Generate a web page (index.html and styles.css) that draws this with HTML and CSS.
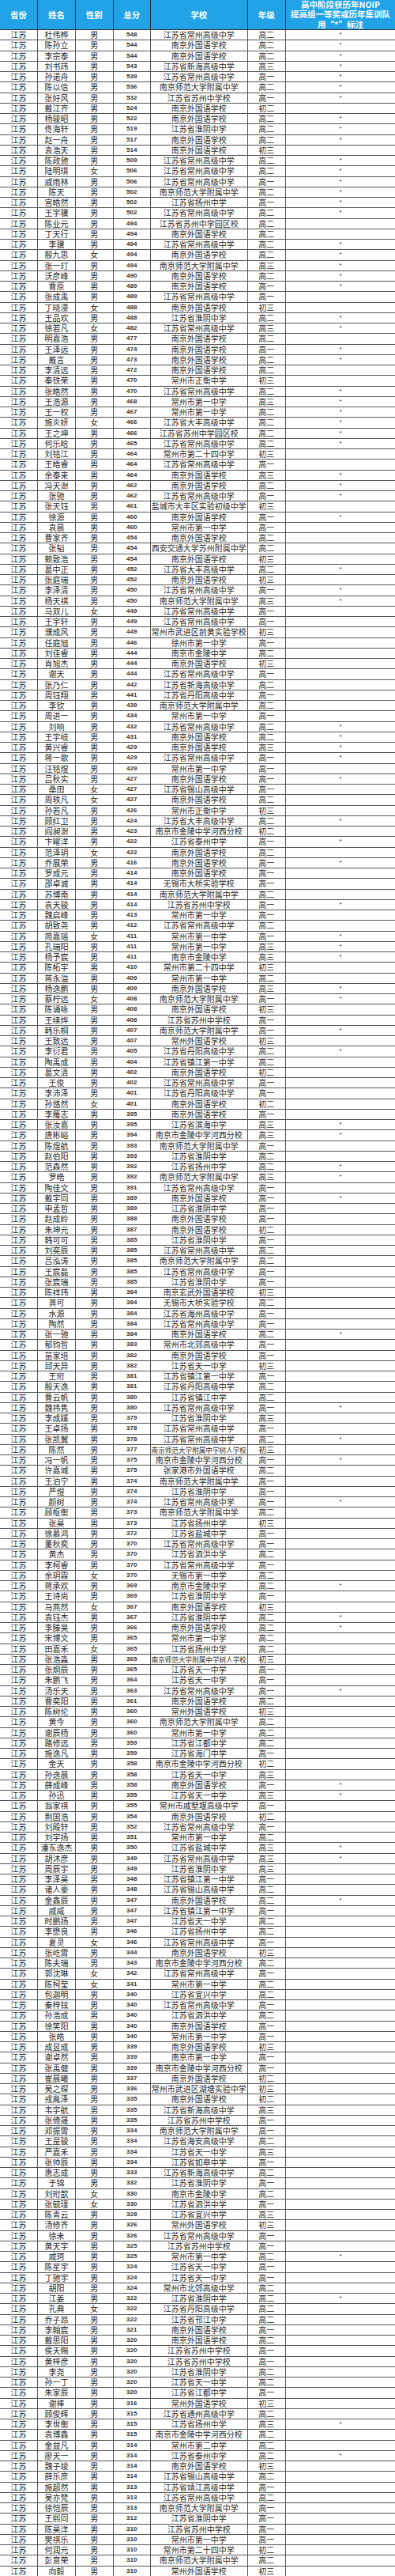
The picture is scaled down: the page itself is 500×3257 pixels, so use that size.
FILE: index.html
```html
<!DOCTYPE html>
<html lang="zh-CN">
<head>
<meta charset="utf-8">
<title>NOIP 江苏</title>
<link rel="stylesheet" href="styles.css">
</head>
<body>
<div class="tbl">
<div class="r hd"><span>省份</span><span>姓名</span><span>性别</span><span>总分</span><span>学校</span><span>年级</span><span class="note">高中阶段获历年NOIP<br>提高组一等奖或历年集训队<br>用“*”标注</span></div>
<div class="r"><span>江苏</span><span>杜伟桦</span><span>男</span><span class="n">548</span><span>江苏省常州高级中学</span><span>高二</span><span class="s">*</span></div>
<div class="r"><span>江苏</span><span>陈孙立</span><span>男</span><span class="n">544</span><span>南京外国语学校</span><span>高二</span><span class="s">*</span></div>
<div class="r"><span>江苏</span><span>李宗泰</span><span>男</span><span class="n">544</span><span>南京外国语学校</span><span>高二</span><span class="s">*</span></div>
<div class="r"><span>江苏</span><span>刘书玮</span><span>男</span><span class="n">543</span><span>江苏省新海高级中学</span><span>高三</span><span class="s">*</span></div>
<div class="r"><span>江苏</span><span>孙诺舟</span><span>男</span><span class="n">539</span><span>江苏省常州高级中学</span><span>高一</span><span class="s">*</span></div>
<div class="r"><span>江苏</span><span>陈以信</span><span>男</span><span class="n">536</span><span>南京师范大学附属中学</span><span>高二</span><span class="s">*</span></div>
<div class="r"><span>江苏</span><span>张好风</span><span>男</span><span class="n">532</span><span>江苏省苏州中学校</span><span>高一</span><span class="s">*</span></div>
<div class="r"><span>江苏</span><span>戴江齐</span><span>男</span><span class="n">524</span><span>南京外国语学校</span><span>初二</span><span class="s"></span></div>
<div class="r"><span>江苏</span><span>杨骏昭</span><span>男</span><span class="n">522</span><span>南京外国语学校</span><span>高二</span><span class="s">*</span></div>
<div class="r"><span>江苏</span><span>佟海轩</span><span>男</span><span class="n">519</span><span>江苏省淮阴中学</span><span>高二</span><span class="s">*</span></div>
<div class="r"><span>江苏</span><span>赵一舟</span><span>男</span><span class="n">517</span><span>南京外国语学校</span><span>高二</span><span class="s">*</span></div>
<div class="r"><span>江苏</span><span>袁浩天</span><span>男</span><span class="n">514</span><span>南京外国语学校</span><span>初三</span><span class="s"></span></div>
<div class="r"><span>江苏</span><span>陈政驰</span><span>男</span><span class="n">509</span><span>江苏省常州高级中学</span><span>高二</span><span class="s">*</span></div>
<div class="r"><span>江苏</span><span>陆明琪</span><span>女</span><span class="n">506</span><span>江苏省常州高级中学</span><span>高二</span><span class="s">*</span></div>
<div class="r"><span>江苏</span><span>戚雨林</span><span>男</span><span class="n">506</span><span>江苏省常州高级中学</span><span>高一</span><span class="s">*</span></div>
<div class="r"><span>江苏</span><span>陈天</span><span>男</span><span class="n">502</span><span>南京师范大学附属中学</span><span>高二</span><span class="s">*</span></div>
<div class="r"><span>江苏</span><span>宫皓然</span><span>男</span><span class="n">502</span><span>江苏省扬州中学</span><span>高一</span><span class="s">*</span></div>
<div class="r"><span>江苏</span><span>王宇骥</span><span>男</span><span class="n">502</span><span>江苏省常州高级中学</span><span>高二</span><span class="s">*</span></div>
<div class="r"><span>江苏</span><span>陈业元</span><span>男</span><span class="n">494</span><span>江苏省苏州中学园区校</span><span>高二</span><span class="s"></span></div>
<div class="r"><span>江苏</span><span>丁天行</span><span>男</span><span class="n">494</span><span>南京外国语学校</span><span>高二</span><span class="s"></span></div>
<div class="r"><span>江苏</span><span>李骥</span><span>男</span><span class="n">494</span><span>江苏省常州高级中学</span><span>高二</span><span class="s">*</span></div>
<div class="r"><span>江苏</span><span>殷九思</span><span>女</span><span class="n">494</span><span>南京外国语学校</span><span>高二</span><span class="s">*</span></div>
<div class="r"><span>江苏</span><span>张一玎</span><span>男</span><span class="n">494</span><span>南京师范大学附属中学</span><span>高三</span><span class="s">*</span></div>
<div class="r"><span>江苏</span><span>沃彦峰</span><span>男</span><span class="n">490</span><span>南京外国语学校</span><span>高二</span><span class="s">*</span></div>
<div class="r"><span>江苏</span><span>曹原</span><span>男</span><span class="n">489</span><span>南京外国语学校</span><span>高一</span><span class="s">*</span></div>
<div class="r"><span>江苏</span><span>张成禹</span><span>男</span><span class="n">489</span><span>江苏省常州高级中学</span><span>高一</span><span class="s"></span></div>
<div class="r"><span>江苏</span><span>丁晓漫</span><span>女</span><span class="n">488</span><span>南京外国语学校</span><span>初三</span><span class="s"></span></div>
<div class="r"><span>江苏</span><span>王品欢</span><span>男</span><span class="n">488</span><span>江苏省淮阴中学</span><span>高二</span><span class="s">*</span></div>
<div class="r"><span>江苏</span><span>徐若凡</span><span>女</span><span class="n">482</span><span>江苏省常州高级中学</span><span>高三</span><span class="s">*</span></div>
<div class="r"><span>江苏</span><span>明嘉浩</span><span>男</span><span class="n">477</span><span>南京外国语学校</span><span>高二</span><span class="s"></span></div>
<div class="r"><span>江苏</span><span>王泽远</span><span>男</span><span class="n">474</span><span>南京外国语学校</span><span>高一</span><span class="s">*</span></div>
<div class="r"><span>江苏</span><span>戴言</span><span>男</span><span class="n">473</span><span>南京外国语学校</span><span>高二</span><span class="s">*</span></div>
<div class="r"><span>江苏</span><span>李清远</span><span>男</span><span class="n">472</span><span>南京外国语学校</span><span>高二</span><span class="s"></span></div>
<div class="r"><span>江苏</span><span>秦铁荣</span><span>男</span><span class="n">470</span><span>常州市正衡中学</span><span>初三</span><span class="s"></span></div>
<div class="r"><span>江苏</span><span>张皓然</span><span>男</span><span class="n">470</span><span>江苏省常州高级中学</span><span>高二</span><span class="s">*</span></div>
<div class="r"><span>江苏</span><span>王浩源</span><span>男</span><span class="n">468</span><span>常州市第一中学</span><span>高三</span><span class="s">*</span></div>
<div class="r"><span>江苏</span><span>王一权</span><span>男</span><span class="n">467</span><span>常州市第一中学</span><span>高二</span><span class="s">*</span></div>
<div class="r"><span>江苏</span><span>施炎妍</span><span>女</span><span class="n">466</span><span>江苏省大丰高级中学</span><span>高二</span><span class="s">*</span></div>
<div class="r"><span>江苏</span><span>王之坤</span><span>男</span><span class="n">466</span><span>江苏省苏州中学园区校</span><span>高二</span><span class="s">*</span></div>
<div class="r"><span>江苏</span><span>何乐晗</span><span>男</span><span class="n">465</span><span>江苏省常州高级中学</span><span>高二</span><span class="s">*</span></div>
<div class="r"><span>江苏</span><span>刘铭江</span><span>男</span><span class="n">464</span><span>常州市第二十四中学</span><span>初三</span><span class="s"></span></div>
<div class="r"><span>江苏</span><span>王皓睿</span><span>男</span><span class="n">464</span><span>江苏省常州高级中学</span><span>高一</span><span class="s"></span></div>
<div class="r"><span>江苏</span><span>余泰来</span><span>男</span><span class="n">464</span><span>南京外国语学校</span><span>高三</span><span class="s">*</span></div>
<div class="r"><span>江苏</span><span>冯天澍</span><span>男</span><span class="n">462</span><span>南京外国语学校</span><span>高二</span><span class="s">*</span></div>
<div class="r"><span>江苏</span><span>张驰</span><span>男</span><span class="n">462</span><span>江苏省常州高级中学</span><span>高一</span><span class="s">*</span></div>
<div class="r"><span>江苏</span><span>张天钰</span><span>男</span><span class="n">461</span><span>盐城市大丰区实验初级中学</span><span>初三</span><span class="s"></span></div>
<div class="r"><span>江苏</span><span>徐源</span><span>男</span><span class="n">460</span><span>南京外国语学校</span><span>高一</span><span class="s">*</span></div>
<div class="r"><span>江苏</span><span>袁晨</span><span>男</span><span class="n">460</span><span>常州市第一中学</span><span>高一</span><span class="s"></span></div>
<div class="r"><span>江苏</span><span>曹家齐</span><span>男</span><span class="n">454</span><span>南京外国语学校</span><span>高二</span><span class="s"></span></div>
<div class="r"><span>江苏</span><span>张韬</span><span>男</span><span class="n">454</span><span>西安交通大学苏州附属中学</span><span>高二</span><span class="s"></span></div>
<div class="r"><span>江苏</span><span>赖致浩</span><span>男</span><span class="n">454</span><span>南京外国语学校</span><span>初三</span><span class="s"></span></div>
<div class="r"><span>江苏</span><span>葛中正</span><span>男</span><span class="n">452</span><span>江苏省大丰高级中学</span><span>高二</span><span class="s">*</span></div>
<div class="r"><span>江苏</span><span>张庭瑞</span><span>男</span><span class="n">452</span><span>南京外国语学校</span><span>初三</span><span class="s"></span></div>
<div class="r"><span>江苏</span><span>李泽清</span><span>男</span><span class="n">450</span><span>江苏省常州高级中学</span><span>高一</span><span class="s">*</span></div>
<div class="r"><span>江苏</span><span>杨天祺</span><span>男</span><span class="n">450</span><span>南京师范大学附属中学</span><span>高三</span><span class="s">*</span></div>
<div class="r"><span>江苏</span><span>马双儿</span><span>女</span><span class="n">449</span><span>江苏省常州高级中学</span><span>高一</span><span class="s"></span></div>
<div class="r"><span>江苏</span><span>王宇轩</span><span>男</span><span class="n">449</span><span>江苏省常州高级中学</span><span>高一</span><span class="s"></span></div>
<div class="r"><span>江苏</span><span>濮成风</span><span>男</span><span class="n">449</span><span>常州市武进区前黄实验学校</span><span>初三</span><span class="s"></span></div>
<div class="r"><span>江苏</span><span>任庭旭</span><span>男</span><span class="n">446</span><span>徐州市第一中学</span><span>高一</span><span class="s"></span></div>
<div class="r"><span>江苏</span><span>刘佳睿</span><span>男</span><span class="n">444</span><span>南京市金陵中学</span><span>高二</span><span class="s"></span></div>
<div class="r"><span>江苏</span><span>肖旭杰</span><span>男</span><span class="n">444</span><span>南京外国语学校</span><span>初三</span><span class="s"></span></div>
<div class="r"><span>江苏</span><span>谢天</span><span>男</span><span class="n">444</span><span>江苏省常州高级中学</span><span>高一</span><span class="s"></span></div>
<div class="r"><span>江苏</span><span>张乃仁</span><span>男</span><span class="n">442</span><span>江苏省新海高级中学</span><span>高二</span><span class="s"></span></div>
<div class="r"><span>江苏</span><span>周钰翔</span><span>男</span><span class="n">441</span><span>江苏省丹阳高级中学</span><span>高一</span><span class="s"></span></div>
<div class="r"><span>江苏</span><span>李钦</span><span>男</span><span class="n">439</span><span>南京师范大学附属中学</span><span>高二</span><span class="s"></span></div>
<div class="r"><span>江苏</span><span>周进一</span><span>男</span><span class="n">434</span><span>常州市第一中学</span><span>高一</span><span class="s"></span></div>
<div class="r"><span>江苏</span><span>刘响</span><span>男</span><span class="n">432</span><span>江苏省常州高级中学</span><span>高二</span><span class="s">*</span></div>
<div class="r"><span>江苏</span><span>王宇岐</span><span>男</span><span class="n">431</span><span>南京外国语学校</span><span>高二</span><span class="s">*</span></div>
<div class="r"><span>江苏</span><span>黄兴睿</span><span>男</span><span class="n">429</span><span>南京外国语学校</span><span>高三</span><span class="s">*</span></div>
<div class="r"><span>江苏</span><span>蒋一歌</span><span>男</span><span class="n">429</span><span>江苏省常州高级中学</span><span>高一</span><span class="s">*</span></div>
<div class="r"><span>江苏</span><span>汪铭煜</span><span>男</span><span class="n">429</span><span>常州市第一中学</span><span>高一</span><span class="s"></span></div>
<div class="r"><span>江苏</span><span>吕秋实</span><span>男</span><span class="n">427</span><span>南京外国语学校</span><span>高一</span><span class="s">*</span></div>
<div class="r"><span>江苏</span><span>桑田</span><span>女</span><span class="n">427</span><span>江苏省锡山高级中学</span><span>高一</span><span class="s"></span></div>
<div class="r"><span>江苏</span><span>周轶凡</span><span>女</span><span class="n">427</span><span>南京外国语学校</span><span>高二</span><span class="s"></span></div>
<div class="r"><span>江苏</span><span>孙若凡</span><span>男</span><span class="n">426</span><span>常州市正衡中学</span><span>初三</span><span class="s"></span></div>
<div class="r"><span>江苏</span><span>顾红卫</span><span>男</span><span class="n">424</span><span>江苏省大丰高级中学</span><span>高二</span><span class="s">*</span></div>
<div class="r"><span>江苏</span><span>阎昶澍</span><span>男</span><span class="n">423</span><span>南京市金陵中学河西分校</span><span>初二</span><span class="s"></span></div>
<div class="r"><span>江苏</span><span>卞曜洋</span><span>男</span><span class="n">422</span><span>江苏省泰州中学</span><span>高一</span><span class="s">*</span></div>
<div class="r"><span>江苏</span><span>范泽玥</span><span>女</span><span class="n">422</span><span>南京外国语学校</span><span>高二</span><span class="s"></span></div>
<div class="r"><span>江苏</span><span>乔展荣</span><span>男</span><span class="n">416</span><span>南京外国语学校</span><span>高一</span><span class="s">*</span></div>
<div class="r"><span>江苏</span><span>罗成元</span><span>男</span><span class="n">414</span><span>南京外国语学校</span><span>高一</span><span class="s"></span></div>
<div class="r"><span>江苏</span><span>邵卓诚</span><span>男</span><span class="n">414</span><span>无锡市大桥实验学校</span><span>高一</span><span class="s"></span></div>
<div class="r"><span>江苏</span><span>苏博南</span><span>男</span><span class="n">414</span><span>南京师范大学附属中学</span><span>高二</span><span class="s"></span></div>
<div class="r"><span>江苏</span><span>袁天骏</span><span>男</span><span class="n">414</span><span>江苏省苏州中学校</span><span>高一</span><span class="s">*</span></div>
<div class="r"><span>江苏</span><span>魏启峰</span><span>男</span><span class="n">413</span><span>常州市第一中学</span><span>高一</span><span class="s"></span></div>
<div class="r"><span>江苏</span><span>胡致尧</span><span>男</span><span class="n">412</span><span>江苏省常州高级中学</span><span>高二</span><span class="s"></span></div>
<div class="r"><span>江苏</span><span>简嘉瑶</span><span>女</span><span class="n">411</span><span>常州市第一中学</span><span>高一</span><span class="s">*</span></div>
<div class="r"><span>江苏</span><span>孔瑞阳</span><span>男</span><span class="n">411</span><span>常州市第一中学</span><span>高三</span><span class="s">*</span></div>
<div class="r"><span>江苏</span><span>杨予宸</span><span>男</span><span class="n">411</span><span>南京市金陵中学</span><span>高三</span><span class="s">*</span></div>
<div class="r"><span>江苏</span><span>陈柘宇</span><span>男</span><span class="n">410</span><span>常州市第二十四中学</span><span>初三</span><span class="s"></span></div>
<div class="r"><span>江苏</span><span>蒋永溢</span><span>男</span><span class="n">409</span><span>常州市第一中学</span><span>高二</span><span class="s"></span></div>
<div class="r"><span>江苏</span><span>杨逸鹏</span><span>男</span><span class="n">409</span><span>南京外国语学校</span><span>高三</span><span class="s">*</span></div>
<div class="r"><span>江苏</span><span>蔡柠远</span><span>女</span><span class="n">408</span><span>南京师范大学附属中学</span><span>高一</span><span class="s">*</span></div>
<div class="r"><span>江苏</span><span>陈诵咏</span><span>男</span><span class="n">408</span><span>南京外国语学校</span><span>初三</span><span class="s"></span></div>
<div class="r"><span>江苏</span><span>王续烨</span><span>男</span><span class="n">408</span><span>江苏省苏州中学校</span><span>高一</span><span class="s"></span></div>
<div class="r"><span>江苏</span><span>韩乐桐</span><span>男</span><span class="n">407</span><span>南京师范大学附属中学</span><span>高一</span><span class="s">*</span></div>
<div class="r"><span>江苏</span><span>王致远</span><span>男</span><span class="n">407</span><span>常州外国语学校</span><span>初三</span><span class="s"></span></div>
<div class="r"><span>江苏</span><span>李衍君</span><span>男</span><span class="n">405</span><span>江苏省丹阳高级中学</span><span>高二</span><span class="s">*</span></div>
<div class="r"><span>江苏</span><span>陶禹成</span><span>男</span><span class="n">404</span><span>江苏省镇江第一中学</span><span>高二</span><span class="s"></span></div>
<div class="r"><span>江苏</span><span>葛文清</span><span>男</span><span class="n">402</span><span>南京外国语学校</span><span>初二</span><span class="s"></span></div>
<div class="r"><span>江苏</span><span>王俊</span><span>男</span><span class="n">402</span><span>江苏省常州高级中学</span><span>高一</span><span class="s"></span></div>
<div class="r"><span>江苏</span><span>李沛泽</span><span>男</span><span class="n">401</span><span>江苏省丹阳高级中学</span><span>高一</span><span class="s"></span></div>
<div class="r"><span>江苏</span><span>孙悠然</span><span>女</span><span class="n">401</span><span>南京外国语学校</span><span>初二</span><span class="s"></span></div>
<div class="r"><span>江苏</span><span>李雁志</span><span>男</span><span class="n">395</span><span>南京外国语学校</span><span>高一</span><span class="s"></span></div>
<div class="r"><span>江苏</span><span>张汝嘉</span><span>男</span><span class="n">395</span><span>江苏省滨海中学</span><span>高三</span><span class="s">*</span></div>
<div class="r"><span>江苏</span><span>唐彬峪</span><span>男</span><span class="n">394</span><span>南京市金陵中学河西分校</span><span>高三</span><span class="s">*</span></div>
<div class="r"><span>江苏</span><span>陈煜航</span><span>男</span><span class="n">393</span><span>南京师范大学附属中学</span><span>高一</span><span class="s"></span></div>
<div class="r"><span>江苏</span><span>赵伯阳</span><span>男</span><span class="n">393</span><span>江苏省淮阴中学</span><span>高二</span><span class="s"></span></div>
<div class="r"><span>江苏</span><span>范森然</span><span>男</span><span class="n">392</span><span>江苏省扬州中学</span><span>高二</span><span class="s">*</span></div>
<div class="r"><span>江苏</span><span>罗皓</span><span>男</span><span class="n">392</span><span>南京师范大学附属中学</span><span>高三</span><span class="s">*</span></div>
<div class="r"><span>江苏</span><span>陶佳文</span><span>男</span><span class="n">391</span><span>江苏省常州高级中学</span><span>高一</span><span class="s"></span></div>
<div class="r"><span>江苏</span><span>戴宇同</span><span>男</span><span class="n">389</span><span>南京外国语学校</span><span>高一</span><span class="s">*</span></div>
<div class="r"><span>江苏</span><span>申孟哲</span><span>男</span><span class="n">389</span><span>江苏省淮阴中学</span><span>高一</span><span class="s"></span></div>
<div class="r"><span>江苏</span><span>赵成岭</span><span>男</span><span class="n">388</span><span>南京外国语学校</span><span>高一</span><span class="s"></span></div>
<div class="r"><span>江苏</span><span>朱坤元</span><span>男</span><span class="n">387</span><span>南京外国语学校</span><span>初二</span><span class="s"></span></div>
<div class="r"><span>江苏</span><span>韩可可</span><span>男</span><span class="n">385</span><span>江苏省淮阴中学</span><span>高一</span><span class="s"></span></div>
<div class="r"><span>江苏</span><span>刘奕辰</span><span>男</span><span class="n">385</span><span>江苏省常州高级中学</span><span>高二</span><span class="s"></span></div>
<div class="r"><span>江苏</span><span>吕泓涛</span><span>男</span><span class="n">385</span><span>南京师范大学附属中学</span><span>高二</span><span class="s"></span></div>
<div class="r"><span>江苏</span><span>王宸磊</span><span>男</span><span class="n">385</span><span>江苏省常州高级中学</span><span>高一</span><span class="s"></span></div>
<div class="r"><span>江苏</span><span>张宸瑞</span><span>男</span><span class="n">385</span><span>江苏省淮阴中学</span><span>高一</span><span class="s"></span></div>
<div class="r"><span>江苏</span><span>陈祥玮</span><span>男</span><span class="n">384</span><span>南京玄武外国语学校</span><span>初三</span><span class="s"></span></div>
<div class="r"><span>江苏</span><span>龚可</span><span>男</span><span class="n">384</span><span>无锡市大桥实验学校</span><span>高二</span><span class="s"></span></div>
<div class="r"><span>江苏</span><span>水源</span><span>男</span><span class="n">384</span><span>江苏省海州高级中学</span><span>高一</span><span class="s"></span></div>
<div class="r"><span>江苏</span><span>陶然</span><span>男</span><span class="n">384</span><span>江苏省常州高级中学</span><span>高一</span><span class="s"></span></div>
<div class="r"><span>江苏</span><span>张一驰</span><span>男</span><span class="n">384</span><span>南京外国语学校</span><span>高二</span><span class="s">*</span></div>
<div class="r"><span>江苏</span><span>郁钧哲</span><span>男</span><span class="n">383</span><span>常州市北郊高级中学</span><span>高一</span><span class="s"></span></div>
<div class="r"><span>江苏</span><span>苗家培</span><span>男</span><span class="n">382</span><span>南京外国语学校</span><span>高一</span><span class="s"></span></div>
<div class="r"><span>江苏</span><span>邱天异</span><span>男</span><span class="n">382</span><span>江苏省天一中学</span><span>初三</span><span class="s"></span></div>
<div class="r"><span>江苏</span><span>王珩</span><span>男</span><span class="n">381</span><span>江苏省镇江第一中学</span><span>高一</span><span class="s"></span></div>
<div class="r"><span>江苏</span><span>殷天逸</span><span>男</span><span class="n">381</span><span>江苏省丹阳高级中学</span><span>高二</span><span class="s"></span></div>
<div class="r"><span>江苏</span><span>曹云帆</span><span>男</span><span class="n">380</span><span>江苏省镇江中学</span><span>高二</span><span class="s"></span></div>
<div class="r"><span>江苏</span><span>魏祎隽</span><span>男</span><span class="n">380</span><span>江苏省常州高级中学</span><span>高一</span><span class="s">*</span></div>
<div class="r"><span>江苏</span><span>李成蹊</span><span>男</span><span class="n">379</span><span>江苏省淮阴中学</span><span>高三</span><span class="s"></span></div>
<div class="r"><span>江苏</span><span>王卓扬</span><span>男</span><span class="n">378</span><span>江苏省常州高级中学</span><span>高一</span><span class="s"></span></div>
<div class="r"><span>江苏</span><span>张凯翼</span><span>男</span><span class="n">378</span><span>江苏省常州高级中学</span><span>高二</span><span class="s">*</span></div>
<div class="r"><span>江苏</span><span>陈然</span><span>男</span><span class="n">377</span><span class="long">南京师范大学附属中学树人学校</span><span>初三</span><span class="s"></span></div>
<div class="r"><span>江苏</span><span>冯一帆</span><span>男</span><span class="n">375</span><span>南京市金陵中学河西分校</span><span>高一</span><span class="s">*</span></div>
<div class="r"><span>江苏</span><span>许嘉城</span><span>男</span><span class="n">375</span><span>张家港市外国语学校</span><span>高二</span><span class="s"></span></div>
<div class="r"><span>江苏</span><span>王泊宁</span><span>男</span><span class="n">374</span><span>南京师范大学附属中学</span><span>高一</span><span class="s"></span></div>
<div class="r"><span>江苏</span><span>严煜</span><span>男</span><span class="n">374</span><span>江苏省淮阴中学</span><span>高一</span><span class="s"></span></div>
<div class="r"><span>江苏</span><span>颜树</span><span>男</span><span class="n">374</span><span>江苏省常州高级中学</span><span>高一</span><span class="s">*</span></div>
<div class="r"><span>江苏</span><span>顾枢衡</span><span>男</span><span class="n">373</span><span>南京师范大学附属中学</span><span>高二</span><span class="s"></span></div>
<div class="r"><span>江苏</span><span>张昊</span><span>男</span><span class="n">373</span><span>江苏省扬州中学</span><span>初三</span><span class="s"></span></div>
<div class="r"><span>江苏</span><span>徐慕鸿</span><span>男</span><span class="n">372</span><span>江苏省盐城中学</span><span>高一</span><span class="s"></span></div>
<div class="r"><span>江苏</span><span>董秋奕</span><span>男</span><span class="n">370</span><span>江苏省常州高级中学</span><span>高一</span><span class="s"></span></div>
<div class="r"><span>江苏</span><span>黄杰</span><span>男</span><span class="n">370</span><span>江苏省泗洪中学</span><span>高二</span><span class="s"></span></div>
<div class="r"><span>江苏</span><span>李柯睿</span><span>男</span><span class="n">370</span><span>江苏省常州高级中学</span><span>高一</span><span class="s"></span></div>
<div class="r"><span>江苏</span><span>余玥霖</span><span>女</span><span class="n">370</span><span>无锡市第一中学</span><span>高二</span><span class="s"></span></div>
<div class="r"><span>江苏</span><span>蒋承欢</span><span>男</span><span class="n">369</span><span>南京市金陵中学</span><span>高二</span><span class="s">*</span></div>
<div class="r"><span>江苏</span><span>王诗尚</span><span>男</span><span class="n">369</span><span>江苏省淮阴中学</span><span>高一</span><span class="s"></span></div>
<div class="r"><span>江苏</span><span>马燕然</span><span>女</span><span class="n">367</span><span>南京外国语学校</span><span>初三</span><span class="s"></span></div>
<div class="r"><span>江苏</span><span>袁钰杰</span><span>男</span><span class="n">367</span><span>江苏省淮阴中学</span><span>高二</span><span class="s">*</span></div>
<div class="r"><span>江苏</span><span>李滕昊</span><span>男</span><span class="n">366</span><span>南京外国语学校</span><span>高二</span><span class="s">*</span></div>
<div class="r"><span>江苏</span><span>宋博文</span><span>男</span><span class="n">365</span><span>常州市第一中学</span><span>高二</span><span class="s"></span></div>
<div class="r"><span>江苏</span><span>田嘉禾</span><span>女</span><span class="n">365</span><span>江苏省扬州中学</span><span>高二</span><span class="s"></span></div>
<div class="r"><span>江苏</span><span>张浩淼</span><span>男</span><span class="n">365</span><span class="long">南京师范大学附属中学树人学校</span><span>初三</span><span class="s"></span></div>
<div class="r"><span>江苏</span><span>张炯辰</span><span>男</span><span class="n">365</span><span>江苏省天一中学</span><span>高一</span><span class="s"></span></div>
<div class="r"><span>江苏</span><span>朱鹏飞</span><span>男</span><span class="n">364</span><span>江苏省天一中学</span><span>高一</span><span class="s"></span></div>
<div class="r"><span>江苏</span><span>汤乐天</span><span>男</span><span class="n">363</span><span>江苏省常州高级中学</span><span>高一</span><span class="s">*</span></div>
<div class="r"><span>江苏</span><span>曹奕阳</span><span>男</span><span class="n">361</span><span>南京外国语学校</span><span>高二</span><span class="s"></span></div>
<div class="r"><span>江苏</span><span>陈树伦</span><span>男</span><span class="n">360</span><span>常州外国语学校</span><span>初三</span><span class="s"></span></div>
<div class="r"><span>江苏</span><span>黄今</span><span>男</span><span class="n">360</span><span>南京师范大学附属中学</span><span>高二</span><span class="s"></span></div>
<div class="r"><span>江苏</span><span>谢辰杨</span><span>男</span><span class="n">360</span><span>常州市第一中学</span><span>高二</span><span class="s"></span></div>
<div class="r"><span>江苏</span><span>路修远</span><span>男</span><span class="n">359</span><span>江苏省江都中学</span><span>高二</span><span class="s"></span></div>
<div class="r"><span>江苏</span><span>施逸凡</span><span>男</span><span class="n">359</span><span>江苏省海门中学</span><span>高一</span><span class="s"></span></div>
<div class="r"><span>江苏</span><span>金天</span><span>男</span><span class="n">358</span><span>南京市金陵中学河西分校</span><span>初二</span><span class="s"></span></div>
<div class="r"><span>江苏</span><span>孙逸晨</span><span>男</span><span class="n">358</span><span>江苏省天一中学</span><span>高三</span><span class="s"></span></div>
<div class="r"><span>江苏</span><span>薛成峰</span><span>男</span><span class="n">358</span><span>南京外国语学校</span><span>高一</span><span class="s">*</span></div>
<div class="r"><span>江苏</span><span>孙迅</span><span>男</span><span class="n">355</span><span>江苏省天一中学</span><span>高三</span><span class="s">*</span></div>
<div class="r"><span>江苏</span><span>翁家祺</span><span>男</span><span class="n">355</span><span>常州市戚墅堰高级中学</span><span>高一</span><span class="s"></span></div>
<div class="r"><span>江苏</span><span>荆国浩</span><span>男</span><span class="n">354</span><span>南京外国语学校</span><span>初二</span><span class="s"></span></div>
<div class="r"><span>江苏</span><span>刘殿轩</span><span>男</span><span class="n">352</span><span>江苏省常州高级中学</span><span>高一</span><span class="s"></span></div>
<div class="r"><span>江苏</span><span>刘宇扬</span><span>男</span><span class="n">351</span><span>常州市第一中学</span><span>高二</span><span class="s"></span></div>
<div class="r"><span>江苏</span><span>潘东逸杰</span><span>男</span><span class="n">350</span><span>江苏省盐城中学</span><span>高三</span><span class="s">*</span></div>
<div class="r"><span>江苏</span><span>胡沐彦</span><span>男</span><span class="n">349</span><span>江苏省常州高级中学</span><span>高三</span><span class="s">*</span></div>
<div class="r"><span>江苏</span><span>周辰宇</span><span>男</span><span class="n">349</span><span>江苏省淮阴中学</span><span>高三</span><span class="s"></span></div>
<div class="r"><span>江苏</span><span>李泽昊</span><span>男</span><span class="n">348</span><span>江苏省镇江第一中学</span><span>高一</span><span class="s"></span></div>
<div class="r"><span>江苏</span><span>诸人豪</span><span>男</span><span class="n">348</span><span>江苏省锡山高级中学</span><span>高二</span><span class="s"></span></div>
<div class="r"><span>江苏</span><span>金鑫辰</span><span>男</span><span class="n">347</span><span>南京外国语学校</span><span>高二</span><span class="s">*</span></div>
<div class="r"><span>江苏</span><span>戚威</span><span>男</span><span class="n">347</span><span>江苏省镇江第一中学</span><span>高一</span><span class="s"></span></div>
<div class="r"><span>江苏</span><span>时鹏扬</span><span>男</span><span class="n">347</span><span>江苏省天一中学</span><span>高二</span><span class="s"></span></div>
<div class="r"><span>江苏</span><span>李懋良</span><span>男</span><span class="n">346</span><span>江苏省扬州中学</span><span>高二</span><span class="s"></span></div>
<div class="r"><span>江苏</span><span>夏灵</span><span>女</span><span class="n">346</span><span>江苏省常州高级中学</span><span>高一</span><span class="s"></span></div>
<div class="r"><span>江苏</span><span>张屹霄</span><span>男</span><span class="n">344</span><span>南京外国语学校</span><span>初三</span><span class="s"></span></div>
<div class="r"><span>江苏</span><span>陈夫瑞</span><span>男</span><span class="n">343</span><span>南京市金陵中学河西分校</span><span>高二</span><span class="s"></span></div>
<div class="r"><span>江苏</span><span>郭沈琳</span><span>女</span><span class="n">342</span><span>江苏省常州高级中学</span><span>高一</span><span class="s"></span></div>
<div class="r"><span>江苏</span><span>陈柯莹</span><span>女</span><span class="n">341</span><span>常州市第一中学</span><span>高二</span><span class="s"></span></div>
<div class="r"><span>江苏</span><span>包迦明</span><span>男</span><span class="n">340</span><span>江苏省宜兴中学</span><span>高二</span><span class="s"></span></div>
<div class="r"><span>江苏</span><span>秦梓铉</span><span>男</span><span class="n">340</span><span>江苏省常州高级中学</span><span>高一</span><span class="s"></span></div>
<div class="r"><span>江苏</span><span>孙浩成</span><span>男</span><span class="n">340</span><span>江苏省泗洪中学</span><span>高二</span><span class="s"></span></div>
<div class="r"><span>江苏</span><span>徐笑阳</span><span>男</span><span class="n">340</span><span>南京外国语学校</span><span>高一</span><span class="s"></span></div>
<div class="r"><span>江苏</span><span>张皓</span><span>男</span><span class="n">340</span><span>常州市第一中学</span><span>高一</span><span class="s"></span></div>
<div class="r"><span>江苏</span><span>成昱成</span><span>男</span><span class="n">339</span><span>南京外国语学校</span><span>初三</span><span class="s"></span></div>
<div class="r"><span>江苏</span><span>谢卓然</span><span>男</span><span class="n">339</span><span>南京市第一中学</span><span>高一</span><span class="s"></span></div>
<div class="r"><span>江苏</span><span>张禹健</span><span>男</span><span class="n">339</span><span>南京市金陵中学河西分校</span><span>高一</span><span class="s"></span></div>
<div class="r"><span>江苏</span><span>崔晨曦</span><span>男</span><span class="n">337</span><span>南京外国语学校</span><span>初二</span><span class="s"></span></div>
<div class="r"><span>江苏</span><span>吴之琛</span><span>男</span><span class="n">336</span><span>常州市武进区湖塘实验中学</span><span>初三</span><span class="s"></span></div>
<div class="r"><span>江苏</span><span>戎胤泽</span><span>男</span><span class="n">335</span><span>南京外国语学校</span><span>初二</span><span class="s"></span></div>
<div class="r"><span>江苏</span><span>韦宇航</span><span>男</span><span class="n">335</span><span>江苏省新海高级中学</span><span>高三</span><span class="s"></span></div>
<div class="r"><span>江苏</span><span>张倚晟</span><span>男</span><span class="n">335</span><span>江苏省苏州中学校</span><span>高一</span><span class="s"></span></div>
<div class="r"><span>江苏</span><span>邓振霄</span><span>男</span><span class="n">334</span><span>南京师范大学附属中学</span><span>高一</span><span class="s"></span></div>
<div class="r"><span>江苏</span><span>王昰骏</span><span>男</span><span class="n">334</span><span>江苏省海安高级中学</span><span>高二</span><span class="s"></span></div>
<div class="r"><span>江苏</span><span>严嘉禾</span><span>男</span><span class="n">334</span><span>江苏省天一中学</span><span>高三</span><span class="s"></span></div>
<div class="r"><span>江苏</span><span>张帅辰</span><span>男</span><span class="n">334</span><span>江苏省如皋中学</span><span>高一</span><span class="s"></span></div>
<div class="r"><span>江苏</span><span>惠志成</span><span>男</span><span class="n">333</span><span>江苏省新海高级中学</span><span>高二</span><span class="s"></span></div>
<div class="r"><span>江苏</span><span>于锦</span><span>男</span><span class="n">332</span><span>江苏省淮阴中学</span><span>高一</span><span class="s"></span></div>
<div class="r"><span>江苏</span><span>刘珩歆</span><span>女</span><span class="n">330</span><span>南京市金陵中学</span><span>高二</span><span class="s"></span></div>
<div class="r"><span>江苏</span><span>张毓瑾</span><span>女</span><span class="n">330</span><span>江苏省泗洪中学</span><span>高一</span><span class="s"></span></div>
<div class="r"><span>江苏</span><span>陈青云</span><span>男</span><span class="n">328</span><span>江苏省宜兴中学</span><span>高三</span><span class="s"></span></div>
<div class="r"><span>江苏</span><span>汤修齐</span><span>男</span><span class="n">326</span><span>常州外国语学校</span><span>初三</span><span class="s"></span></div>
<div class="r"><span>江苏</span><span>徐未</span><span>男</span><span class="n">326</span><span>江苏省常州高级中学</span><span>高一</span><span class="s"></span></div>
<div class="r"><span>江苏</span><span>黄天宇</span><span>男</span><span class="n">325</span><span>江苏省苏州中学校</span><span>高一</span><span class="s"></span></div>
<div class="r"><span>江苏</span><span>戚珂</span><span>男</span><span class="n">325</span><span>常州市第一中学</span><span>高二</span><span class="s">*</span></div>
<div class="r"><span>江苏</span><span>陈星宇</span><span>男</span><span class="n">324</span><span>江苏省天一中学</span><span>高一</span><span class="s"></span></div>
<div class="r"><span>江苏</span><span>丁驰宇</span><span>男</span><span class="n">324</span><span>江苏省天一中学</span><span>高一</span><span class="s"></span></div>
<div class="r"><span>江苏</span><span>胡阳</span><span>男</span><span class="n">324</span><span>常州市北郊高级中学</span><span>高二</span><span class="s"></span></div>
<div class="r"><span>江苏</span><span>江姜</span><span>男</span><span class="n">322</span><span>江苏省淮阴中学</span><span>高二</span><span class="s">*</span></div>
<div class="r"><span>江苏</span><span>孔典</span><span>女</span><span class="n">322</span><span>江苏省丹阳高级中学</span><span>高二</span><span class="s"></span></div>
<div class="r"><span>江苏</span><span>乔子昂</span><span>男</span><span class="n">322</span><span>江苏省邗江中学</span><span>高二</span><span class="s"></span></div>
<div class="r"><span>江苏</span><span>李翰宸</span><span>男</span><span class="n">321</span><span>南京外国语学校</span><span>高一</span><span class="s"></span></div>
<div class="r"><span>江苏</span><span>戴思阳</span><span>男</span><span class="n">320</span><span>南京外国语学校</span><span>高二</span><span class="s"></span></div>
<div class="r"><span>江苏</span><span>侯天赐</span><span>男</span><span class="n">320</span><span>江苏省苏州中学校</span><span>高一</span><span class="s"></span></div>
<div class="r"><span>江苏</span><span>黄梓彦</span><span>男</span><span class="n">320</span><span>江苏省苏州中学校</span><span>高一</span><span class="s"></span></div>
<div class="r"><span>江苏</span><span>李尧</span><span>男</span><span class="n">320</span><span>江苏省淮阴中学</span><span>高二</span><span class="s"></span></div>
<div class="r"><span>江苏</span><span>孙一丁</span><span>男</span><span class="n">320</span><span>江苏省天一中学</span><span>高二</span><span class="s"></span></div>
<div class="r"><span>江苏</span><span>朱家辰</span><span>男</span><span class="n">320</span><span>江苏省江都中学</span><span>高一</span><span class="s"></span></div>
<div class="r"><span>江苏</span><span>谢棒</span><span>男</span><span class="n">316</span><span>常州外国语学校</span><span>初三</span><span class="s"></span></div>
<div class="r"><span>江苏</span><span>顾俊辉</span><span>男</span><span class="n">315</span><span>江苏省通州高级中学</span><span>高二</span><span class="s"></span></div>
<div class="r"><span>江苏</span><span>李世衡</span><span>男</span><span class="n">315</span><span>江苏省扬州中学</span><span>高三</span><span class="s">*</span></div>
<div class="r"><span>江苏</span><span>袁博鑫</span><span>男</span><span class="n">315</span><span>南京市金陵中学河西分校</span><span>高二</span><span class="s"></span></div>
<div class="r"><span>江苏</span><span>金益凡</span><span>男</span><span class="n">314</span><span>常州市第二中学</span><span>高二</span><span class="s"></span></div>
<div class="r"><span>江苏</span><span>廖天一</span><span>男</span><span class="n">314</span><span>江苏省泰州中学</span><span>高二</span><span class="s">*</span></div>
<div class="r"><span>江苏</span><span>魏子竣</span><span>男</span><span class="n">314</span><span>南京外国语学校</span><span>初三</span><span class="s"></span></div>
<div class="r"><span>江苏</span><span>薛乐彦</span><span>男</span><span class="n">314</span><span>江苏省锡山高级中学</span><span>高二</span><span class="s"></span></div>
<div class="r"><span>江苏</span><span>施超然</span><span>男</span><span class="n">313</span><span>江苏省靖江高级中学</span><span>高一</span><span class="s"></span></div>
<div class="r"><span>江苏</span><span>吴亦梵</span><span>男</span><span class="n">313</span><span>江苏省常州高级中学</span><span>高二</span><span class="s"></span></div>
<div class="r"><span>江苏</span><span>徐恺辰</span><span>男</span><span class="n">313</span><span>南京师范大学附属中学</span><span>高一</span><span class="s"></span></div>
<div class="r"><span>江苏</span><span>王熙同</span><span>男</span><span class="n">312</span><span>江苏省淮阴中学</span><span>高一</span><span class="s"></span></div>
<div class="r"><span>江苏</span><span>陈昊洋</span><span>男</span><span class="n">310</span><span>江苏省苏州中学校</span><span>高一</span><span class="s"></span></div>
<div class="r"><span>江苏</span><span>樊祺乐</span><span>男</span><span class="n">310</span><span>常州市第一中学</span><span>高一</span><span class="s"></span></div>
<div class="r"><span>江苏</span><span>何润元</span><span>男</span><span class="n">310</span><span>常州市第二十四中学</span><span>初二</span><span class="s"></span></div>
<div class="r"><span>江苏</span><span>彭意荣</span><span>男</span><span class="n">310</span><span>南京师范大学附属中学</span><span>高二</span><span class="s"></span></div>
<div class="r"><span>江苏</span><span>向毅</span><span>男</span><span class="n">310</span><span>常州外国语学校</span><span>初三</span><span class="s"></span></div>
</div>
</body>
</html>
```

FILE: styles.css
```css
* {
  box-sizing: border-box;
  margin: 0;
  padding: 0;
}

body {
  margin: 0;
  background: #ffffff;
  font-family: "Noto Sans CJK SC", "Noto Sans", sans-serif;
  color: #2b2b2b;
}

.tbl {
  width: 500px;
  display: flex;
  flex-direction: column;
}

.r {
  display: grid;
  grid-template-columns: 48px 48px 47.5px 47.5px 122.5px 48.5px 138px;
  height: 13.25px;
  border-bottom: 1px solid #555555;
}

.r > span {
  display: flex;
  align-items: center;
  justify-content: center;
  white-space: nowrap;
  border-right: 1px solid #555555;
  font-size: 10px;
  line-height: 12px;
  min-width: 0;
}

.r > span:last-child {
  border-right: 0;
}

.r > .long {
  font-size: 8.6px;
}

.r > .n {
  font-family: "Liberation Sans", Arial, sans-serif;
  font-size: 8px;
  font-weight: bold;
  color: #333333;
}

.r > .s {
  align-items: flex-start;
  font-family: "Liberation Sans", Arial, sans-serif;
  font-size: 8px;
  line-height: 9px;
  padding-top: 1px;
}

.hd {
  height: 38px;
  background: #22a3e8;
  color: #ffffff;
  font-weight: bold;
  border-bottom: 1px solid #333333;
}

.hd > span {
  font-size: 10.5px;
  line-height: 13px;
  border-right-color: #2a2a2a;
}

.hd > .note {
  text-align: center;
  line-height: 12.3px;
  white-space: normal;
}
```
